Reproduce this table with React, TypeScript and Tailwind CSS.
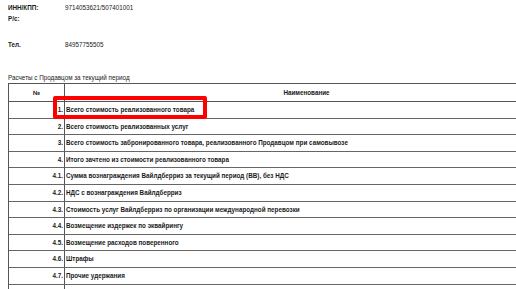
const rows: [string, string][] = [
  ['1.', 'Всего стоимость реализованного товара'],
  ['2.', 'Всего стоимость реализованных услуг'],
  ['3.', 'Всего стоимость забронированного товара, реализованного Продавцом при самовывозе'],
  ['4.', 'Итого зачтено из стоимости реализованного товара'],
  ['4.1.', 'Сумма вознаграждения Вайлдберриз за текущий период (ВВ), без НДС'],
  ['4.2.', 'НДС с вознаграждения Вайлдберриз'],
  ['4.3.', 'Стоимость услуг Вайлдберриз по организации международной перевозки'],
  ['4.4.', 'Возмещение издержек по эквайрингу'],
  ['4.5.', 'Возмещение расходов поверенного'],
  ['4.6.', 'Штрафы'],
  ['4.7.', 'Прочие удержания'],
  ['', ''],
]

export default function App() {
  return (
    <div className="relative h-[289px] w-[516px] overflow-hidden bg-white font-['Liberation_Sans',Arial,sans-serif] text-[6.3px] text-[#1a1a1a]">
      <div className="pl-2 pt-[2px]">
        <div className="flex h-[11px] items-center">
          <span className="w-[57px] font-bold">ИНН/КПП:</span>
          <span>9714053621/507401001</span>
        </div>
        <div className="flex h-[11px] items-center">
          <span className="w-[57px] font-bold">Р/с:</span>
        </div>
        <div className="mt-[15px] flex h-[11px] items-center">
          <span className="w-[57px] font-bold">Тел.</span>
          <span>84957755505</span>
        </div>
        <div className="mt-[23px] flex h-[10px] items-center">Расчеты с Продавцом за текущий период</div>
      </div>

      <div className="ml-2 w-[540px] border-l border-t border-[#555]">
        <div className="flex h-[18px] border-b border-[#555] font-bold">
          <div className="flex w-[56px] items-center justify-center border-r border-[#555]">№</div>
          <div className="flex flex-1 items-center justify-center">Наименование</div>
        </div>
        {rows.map(([num, name], i) => (
          <div key={i} className="flex h-[16.6px] border-b border-[#666] font-bold">
            <div className="flex w-[56px] items-center justify-end border-r border-[#555] pr-[1px]">{num}</div>
            <div className="flex flex-1 items-center pl-[1px]">{name}</div>
          </div>
        ))}
      </div>

      <div className="absolute left-[53px] top-[96px] h-[23px] w-[154px] rounded-[2px] border-[4px] border-[#ff0000]" />
    </div>
  )
}
